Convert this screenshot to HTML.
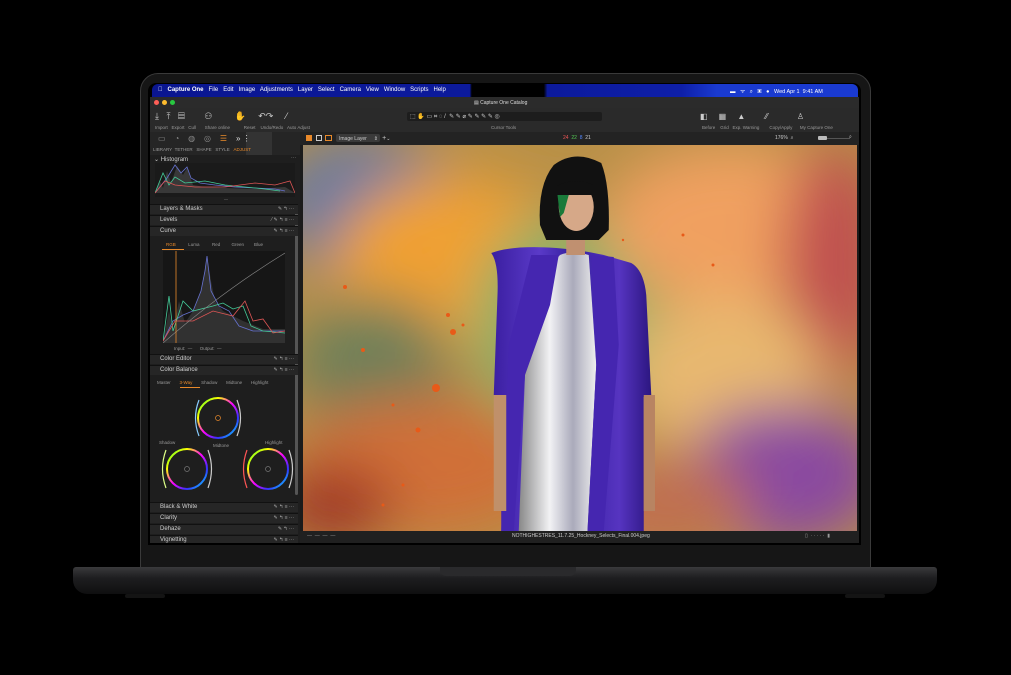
<!DOCTYPE html>
<html><head><meta charset="utf-8"><style>
*{margin:0;padding:0;box-sizing:border-box}
body{width:1011px;height:675px;background:#000;position:relative;overflow:hidden;font-family:"Liberation Sans",sans-serif;color:#bbb}
.a{position:absolute}
.t{position:absolute;font-size:5px;color:#9a9a9a;white-space:nowrap}
.sec{position:absolute;left:150px;width:148px;height:10px;background:#262626;border-top:1px solid #111;font-size:6px;color:#ccc;padding-left:10px;line-height:9px}
.sec i{position:absolute;right:4px;top:0;font-style:normal;font-size:5px;color:#aaa}
</style></head><body>
<!-- lid -->
<div class="a" style="left:140px;top:73px;width:731px;height:496px;background:#161616;border-radius:18px 18px 0 0;border:1px solid #3a3a3a"></div>
<div class="a" style="left:148px;top:83px;width:713px;height:462px;background:#000;border-radius:8px 8px 0 0"></div>
<!-- base -->
<div class="a" style="left:73px;top:567px;width:864px;height:27px;background:linear-gradient(#3a3a3c,#1e1e20 40%,#0f0f10);border-radius:3px 3px 14px 14px"></div>
<div class="a" style="left:440px;top:567px;width:136px;height:9px;background:#2a2a2c;border-radius:0 0 6px 6px"></div>
<div class="a" style="left:125px;top:594px;width:40px;height:4px;background:#141414;border-radius:2px"></div>
<div class="a" style="left:845px;top:594px;width:40px;height:4px;background:#141414;border-radius:2px"></div>
<!-- menu bar -->
<div class="a" style="left:152px;top:84px;width:706px;height:13px;background:linear-gradient(90deg,#0a1690,#0c1a9c 45%,#000 45.3%,#000 55.5%,#0c1a9c 56%,#0e1fa8 75%,#1a3ad0 80%,#1a3ad0);border-radius:6px 6px 0 0"></div>
<div class="t" style="left:158px;top:87px;font-size:6px;color:#fff">&#63743;&nbsp;&nbsp;&nbsp;<b>Capture One</b>&nbsp;&nbsp; File&nbsp;&nbsp; Edit&nbsp;&nbsp; Image&nbsp;&nbsp; Adjustments&nbsp;&nbsp; Layer&nbsp;&nbsp; Select&nbsp;&nbsp; Camera&nbsp;&nbsp; View&nbsp;&nbsp; Window&nbsp;&nbsp; Scripts&nbsp;&nbsp; Help</div>
<div class="t" style="left:730px;top:87px;font-size:5.5px;color:#fff">▬&nbsp;&nbsp; ᯤ&nbsp;&nbsp; ⌕&nbsp;&nbsp; ▣&nbsp;&nbsp; ●&nbsp;&nbsp; Wed Apr 1&nbsp; 9:41 AM</div>
<!-- title bar -->
<div class="a" style="left:150px;top:97px;width:709px;height:11px;background:#2b2b2b"></div>
<div class="a" style="left:154px;top:100px;width:5px;height:5px;border-radius:50%;background:#fe5f57"></div>
<div class="a" style="left:162px;top:100px;width:5px;height:5px;border-radius:50%;background:#febc2e"></div>
<div class="a" style="left:170px;top:100px;width:5px;height:5px;border-radius:50%;background:#28c840"></div>
<div class="t" style="left:474px;top:100px;color:#ddd">▤ Capture One Catalog</div>
<!-- toolbar -->
<div class="a" style="left:150px;top:108px;width:709px;height:24px;background:#2a2a2a"></div>
<div class="t" style="left:155px;top:111px;font-size:9px;color:#ccc">⤓&nbsp;&nbsp;&nbsp;⤒&nbsp;&nbsp;&nbsp;▤&nbsp;&nbsp;&nbsp;&nbsp;&nbsp;&nbsp;&nbsp;&nbsp;⚇&nbsp;&nbsp;&nbsp;&nbsp;&nbsp;&nbsp;&nbsp;&nbsp;&nbsp;✋&nbsp;&nbsp;&nbsp;&nbsp;&nbsp;↶↷&nbsp;&nbsp;&nbsp;&nbsp;&nbsp;⁄</div>
<div class="t" style="left:155px;top:125px;font-size:4.5px">Import&nbsp;&nbsp;&nbsp;Export&nbsp;&nbsp;&nbsp;Cull&nbsp;&nbsp;&nbsp;&nbsp;&nbsp;&nbsp;&nbsp;Share online&nbsp;&nbsp;&nbsp;&nbsp;&nbsp;&nbsp;&nbsp;&nbsp;&nbsp;&nbsp;&nbsp;Reset&nbsp;&nbsp;&nbsp;&nbsp;Undo/Redo&nbsp;&nbsp;&nbsp;Auto Adjust</div>
<div class="a" style="left:407px;top:112px;width:195px;height:9px;background:#1d1d1d;border-radius:2px"></div>
<div class="t" style="left:410px;top:113px;font-size:6px;color:#ccc">⬚ <span style="color:#e8892a">✋</span> ▭ ⌗ ◌ /&nbsp; ✎ ✎ ⌀ ✎ ✎ ✎ ✎ ◎</div>
<div class="t" style="left:491px;top:125px;font-size:4.5px">Cursor Tools</div>
<div class="t" style="left:700px;top:112px;font-size:8px;color:#ccc">◧&nbsp;&nbsp;&nbsp;&nbsp;&nbsp;▦&nbsp;&nbsp;&nbsp;&nbsp;&nbsp;▲&nbsp;&nbsp;&nbsp;&nbsp;&nbsp;&nbsp;&nbsp;&nbsp;&nbsp;⁄⁄&nbsp;&nbsp;&nbsp;&nbsp;&nbsp;&nbsp;&nbsp;&nbsp;&nbsp;&nbsp;&nbsp;&nbsp;&nbsp;♙</div>
<div class="t" style="left:702px;top:125px;font-size:4.5px">Before&nbsp;&nbsp;&nbsp;&nbsp;Grid&nbsp;&nbsp;&nbsp;Exp. Warning&nbsp;&nbsp;&nbsp;&nbsp;&nbsp;&nbsp;&nbsp;&nbsp;Copy/Apply&nbsp;&nbsp;&nbsp;&nbsp;&nbsp;&nbsp;My Capture One</div>
<!-- tool tabs -->
<div class="a" style="left:150px;top:132px;width:150px;height:23px;background:#252525"></div>
<div class="a" style="left:246px;top:132px;width:26px;height:23px;background:#333"></div>
<div class="t" style="left:158px;top:134px;font-size:8px;color:#888">▭&nbsp;&nbsp;&nbsp;&nbsp;◔&nbsp;&nbsp;&nbsp;&nbsp;◍&nbsp;&nbsp;&nbsp;&nbsp;◎&nbsp;&nbsp;&nbsp;&nbsp;<span style="color:#e8892a">☰</span>&nbsp;&nbsp;&nbsp;&nbsp;<span style="color:#ddd">» ⋮</span></div>
<div class="t" style="left:153px;top:147px;font-size:4.5px">LIBRARY&nbsp;&nbsp;TETHER&nbsp;&nbsp;&nbsp;SHAPE&nbsp;&nbsp;&nbsp;STYLE&nbsp;&nbsp;&nbsp;<span style="color:#e8892a">ADJUST</span></div>
<!-- viewer toolbar -->
<div class="a" style="left:300px;top:132px;width:559px;height:13px;background:#232323"></div>
<div class="a" style="left:306px;top:135px;width:6px;height:6px;background:#e8892a"></div>
<div class="a" style="left:316px;top:135px;width:6px;height:6px;border:1px solid #ccc"></div>
<div class="a" style="left:325px;top:135px;width:7px;height:6px;border:1px solid #e8892a"></div>
<div class="a" style="left:336px;top:134px;width:44px;height:8px;background:#3a3a3a;border-radius:2px"></div>
<div class="t" style="left:339px;top:135px;color:#ccc">Image Layer&nbsp;&nbsp;&nbsp;&nbsp;&nbsp;⇕&nbsp;&nbsp; <span style="font-size:7px">+</span>⌄</div>
<div class="t" style="left:563px;top:135px;font-size:5px"><span style="color:#e55">24</span>&nbsp;&nbsp;<span style="color:#5c5">22</span>&nbsp;&nbsp;<span style="color:#58f">8</span>&nbsp;&nbsp;<span style="color:#ccc">21</span></div>
<div class="t" style="left:775px;top:135px;color:#ccc">176%&nbsp; ⌕</div>
<div class="a" style="left:820px;top:138px;width:30px;height:1px;background:#555"></div>
<div class="a" style="left:818px;top:136px;width:9px;height:4px;background:#bbb;border-radius:1px"></div>
<div class="t" style="left:849px;top:134px;color:#ccc">⌕</div>
<!-- left panel -->
<div class="a" style="left:150px;top:155px;width:150px;height:388px;background:#1e1e1e"></div>
<div class="a" style="left:295px;top:205px;width:3px;height:290px;background:#555;border-radius:2px"></div>
<div class="t" style="left:154px;top:156px;font-size:6px;color:#ccc">⌄ Histogram</div>
<div class="t" style="left:291px;top:155px">···</div>
<svg class="a" style="left:155px;top:163px" width="140" height="34" viewBox="0 0 140 34">
<rect width="140" height="34" fill="#1a1a1a"/>
<path d="M0 30 L5 18 L8 25 L12 8 L16 20 L22 3 L28 12 L32 5 L38 22 L50 24 L70 25 L100 26 L130 24 L140 30Z" fill="#555" opacity=".5"/>
<path d="M0 30 L12 15 L20 2 L26 10 L32 4 L36 15 L45 20 L60 22 L80 24 L100 25 L120 26 L130 28" fill="none" stroke="#6672d0" stroke-width=".8"/>
<path d="M0 30 L8 10 L14 22 L20 14 L30 20 L50 18 L70 22 L90 24 L110 26 L125 28" fill="none" stroke="#4c9" stroke-width=".8"/>
<path d="M0 30 L10 18 L20 22 L40 24 L70 24 L100 20 L120 22 L135 18 L140 30" fill="none" stroke="#d55" stroke-width=".8"/>
</svg>
<div class="t" style="left:224px;top:196px;font-size:4px">—</div>
<div class="sec" style="top:204px">Layers &amp; Masks<i>✎ ↰ ···</i></div>
<div class="sec" style="top:215px">Levels<i>⁄ ✎ ↰ ≡ ···</i></div>
<div class="sec" style="top:226px">Curve<i>✎ ↰ ≡ ···</i></div>
<div class="t" style="left:166px;top:242px;font-size:4.5px"><span style="color:#e8892a">RGB</span>&nbsp;&nbsp;&nbsp;&nbsp;&nbsp;&nbsp;&nbsp;&nbsp;&nbsp;&nbsp;Luma&nbsp;&nbsp;&nbsp;&nbsp;&nbsp;&nbsp;&nbsp;&nbsp;&nbsp;&nbsp;Red&nbsp;&nbsp;&nbsp;&nbsp;&nbsp;&nbsp;&nbsp;&nbsp;&nbsp;Green&nbsp;&nbsp;&nbsp;&nbsp;&nbsp;&nbsp;&nbsp;&nbsp;Blue</div>
<div class="a" style="left:162px;top:249px;width:22px;height:1px;background:#e8892a"></div>
<svg class="a" style="left:163px;top:251px" width="122" height="92" viewBox="0 0 122 92">
<rect width="122" height="92" fill="#161616"/>
<path d="M0 90 L6 60 L10 80 L16 50 L22 72 L30 60 L38 40 L44 5 L48 30 L52 50 L60 60 L70 65 L80 70 L100 78 L122 78 L122 92 L0 92Z" fill="#444" opacity=".6"/>
<path d="M0 90 L10 70 L20 64 L30 60 L38 40 L42 20 L44 5 L48 40 L56 55 L66 60 L76 75 L90 80 L122 80" fill="none" stroke="#6672d0" stroke-width=".8"/>
<path d="M0 90 L6 45 L10 80 L20 50 L30 60 L50 55 L60 52 L70 58 L80 55 L88 75 L100 80 L122 82" fill="none" stroke="#4c9" stroke-width=".8"/>
<path d="M0 90 L12 70 L30 70 L50 60 L70 65 L82 50 L90 70 L100 68 L110 82 L122 80" fill="none" stroke="#d55" stroke-width=".8"/>
<path d="M0 92 Q60 40 122 2" fill="none" stroke="#888" stroke-width=".6"/>
<line x1="13" y1="0" x2="13" y2="92" stroke="#e8892a" stroke-width=".8"/>
</svg>
<div class="t" style="left:174px;top:346px;font-size:4.5px">Input:&nbsp; —&nbsp;&nbsp;&nbsp;&nbsp;&nbsp;&nbsp;Output:&nbsp; —</div>
<div class="sec" style="top:354px">Color Editor<i>✎ ↰ ≡ ···</i></div>
<div class="sec" style="top:365px">Color Balance<i>✎ ↰ ≡ ···</i></div>
<div class="t" style="left:157px;top:380px;font-size:4.5px">Master&nbsp;&nbsp;&nbsp;&nbsp;&nbsp;&nbsp;&nbsp;<span style="color:#e8892a">3-Way</span>&nbsp;&nbsp;&nbsp;&nbsp;&nbsp;&nbsp;&nbsp;Shadow&nbsp;&nbsp;&nbsp;&nbsp;&nbsp;&nbsp;&nbsp;Midtone&nbsp;&nbsp;&nbsp;&nbsp;&nbsp;&nbsp;&nbsp;Highlight</div>
<div class="a" style="left:180px;top:387px;width:20px;height:1px;background:#e8892a"></div>
<svg class="a" style="left:150px;top:390px" width="148" height="110" viewBox="0 0 148 110">
<defs><linearGradient id="w" x1="0" y1="0" x2="1" y2="1"><stop offset="0" stop-color="#3f3"/><stop offset=".25" stop-color="#ff0"/><stop offset=".5" stop-color="#f0f"/><stop offset=".75" stop-color="#33f"/><stop offset="1" stop-color="#0ff"/></linearGradient></defs>
<circle cx="68" cy="28" r="20" fill="none" stroke="url(#w)" stroke-width="2"/>
<circle cx="68" cy="28" r="2.5" fill="none" stroke="#e8892a" stroke-width=".7"/>
<path d="M49 10 Q42 28 49 46" fill="none" stroke="#8cf" stroke-width="1.2"/>
<path d="M87 10 Q94 28 87 46" fill="none" stroke="#ccc" stroke-width="1.2"/>
<circle cx="37" cy="79" r="20" fill="none" stroke="url(#w)" stroke-width="2"/>
<circle cx="37" cy="79" r="2.5" fill="none" stroke="#777" stroke-width=".7"/>
<path d="M16 60 Q9 79 16 98" fill="none" stroke="#df8" stroke-width="1.2"/>
<path d="M58 60 Q65 79 58 98" fill="none" stroke="#ccc" stroke-width="1.2"/>
<circle cx="118" cy="79" r="20" fill="none" stroke="url(#w)" stroke-width="2"/>
<circle cx="118" cy="79" r="2.5" fill="none" stroke="#777" stroke-width=".7"/>
<path d="M97 60 Q90 79 97 98" fill="none" stroke="#f55" stroke-width="1.2"/>
<path d="M139 60 Q146 79 139 98" fill="none" stroke="#ccc" stroke-width="1.2"/>
<text x="9" y="54" font-size="4.5" fill="#999" font-family="Liberation Sans">Shadow</text>
<text x="63" y="57" font-size="4.5" fill="#999" font-family="Liberation Sans">Midtone</text>
<text x="115" y="54" font-size="4.5" fill="#999" font-family="Liberation Sans">Highlight</text>
</svg>
<div class="sec" style="top:502px">Black &amp; White<i>✎ ↰ ≡ ···</i></div>
<div class="sec" style="top:513px">Clarity<i>✎ ↰ ≡ ···</i></div>
<div class="sec" style="top:524px">Dehaze<i>✎ ↰ ···</i></div>
<div class="sec" style="top:535px;height:8px">Vignetting<i>✎ ↰ ≡ ···</i></div>
<!-- viewer -->
<div class="a" style="left:300px;top:145px;width:559px;height:398px;background:#1b1b1b"></div>
<svg class="a" style="left:303px;top:145px" width="554" height="386" viewBox="0 0 554 386">
<defs>
<filter id="b"><feGaussianBlur stdDeviation="28"/></filter>
<linearGradient id="coat" x1="0" x2="1"><stop offset="0" stop-color="#3a1ea0"/><stop offset=".3" stop-color="#5a3ac8"/><stop offset=".5" stop-color="#3620a0"/><stop offset=".8" stop-color="#5634c0"/><stop offset="1" stop-color="#2c1680"/></linearGradient>
<linearGradient id="sil" x1="0" x2="1"><stop offset="0" stop-color="#888"/><stop offset=".4" stop-color="#f2f2f4"/><stop offset=".7" stop-color="#aab"/><stop offset="1" stop-color="#eee"/></linearGradient>
</defs>
<rect width="554" height="386" fill="#b89048"/>
<g filter="url(#b)">
<ellipse cx="60" cy="60" rx="90" ry="70" fill="#6a7aa0"/>
<ellipse cx="150" cy="120" rx="120" ry="90" fill="#f0a030"/>
<ellipse cx="260" cy="180" rx="90" ry="110" fill="#8ab068"/>
<ellipse cx="70" cy="220" rx="80" ry="70" fill="#708058"/>
<ellipse cx="120" cy="320" rx="130" ry="70" fill="#d07038"/>
<ellipse cx="430" cy="80" rx="130" ry="80" fill="#f0a060"/>
<ellipse cx="530" cy="120" rx="50" ry="120" fill="#c05050"/>
<ellipse cx="420" cy="230" rx="100" ry="80" fill="#e8b870"/>
<ellipse cx="480" cy="330" rx="100" ry="70" fill="#8a4aa0"/>
<ellipse cx="360" cy="360" rx="90" ry="50" fill="#c07050"/>
<ellipse cx="30" cy="360" rx="60" ry="40" fill="#a03828"/>
</g>
<g fill="#e85a18">
<circle cx="133" cy="243" r="4"/><circle cx="150" cy="187" r="3"/><circle cx="42" cy="142" r="2"/><circle cx="60" cy="205" r="2"/><circle cx="115" cy="285" r="2.5"/><circle cx="90" cy="260" r="1.5"/><circle cx="145" cy="170" r="2"/><circle cx="160" cy="180" r="1.5"/><circle cx="380" cy="90" r="1.5"/><circle cx="410" cy="120" r="1.5"/><circle cx="320" cy="95" r="1.2"/><circle cx="100" cy="340" r="1.5"/><circle cx="80" cy="360" r="1.5"/>
</g>
<!-- person -->
<g transform="translate(272,0) scale(1.25,1) translate(-245,0)">
<path d="M178 108 Q195 100 230 103 Q250 105 268 110 L290 118 Q300 125 302 150 L306 250 L300 252 L300 330 L300 386 L186 386 L186 330 L188 252 L180 250 L183 150 Q184 118 178 108Z" fill="url(#coat)"/>
<path d="M233 110 Q242 105 256 110 L262 220 L255 386 L200 386 L205 230 Q210 140 233 110Z" fill="url(#sil)"/>
<path d="M210 110 L232 110 L225 160 L205 230 L196 386 L186 386 L192 200Z" fill="#4526b0"/>
<path d="M258 110 L276 112 L280 200 L268 386 L255 386 L262 220Z" fill="#4526b0"/>
<rect x="238" y="85" width="15" height="25" fill="#c09070"/>
<path d="M228 20 Q245 4 266 18 Q273 40 272 85 L264 95 L222 95 L217 80 Q215 40 228 20Z" fill="#111"/>
<ellipse cx="246" cy="62" rx="14" ry="24" fill="#d6a888"/>
<path d="M229 42 Q246 30 263 42 L263 50 L229 50Z" fill="#111"/>
<path d="M231 50 L240 50 L236 68 L233 72Z" fill="#1a7a3a"/>
<rect x="180" y="250" width="10" height="116" fill="#c0906a"/>
<rect x="300" y="250" width="9" height="116" fill="#b88462"/>
</g>
</svg>
<div class="a" style="left:300px;top:531px;width:559px;height:12px;background:#202020"></div>
<div class="t" style="left:307px;top:533px">—&nbsp; —&nbsp; —&nbsp; —</div>
<div class="t" style="left:512px;top:533px;color:#ccc">NOTHIGHESTRES_11.7.25_Hockney_Selects_Final.004.jpeg</div>
<div class="t" style="left:805px;top:533px">▯&nbsp;&nbsp;·&nbsp;·&nbsp;·&nbsp;·&nbsp;·&nbsp;&nbsp;▮</div>
</body></html>
